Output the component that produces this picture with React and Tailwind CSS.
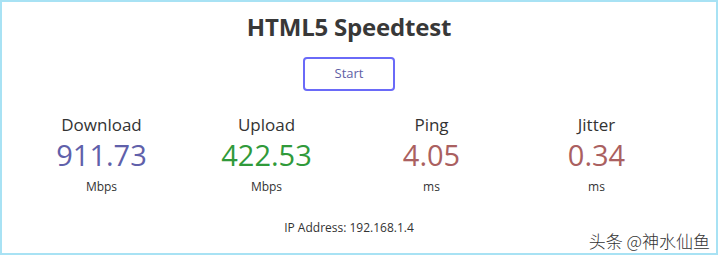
import React from 'react';

const metrics = [
  { label: 'Download', value: '911.73', unit: 'Mbps', color: 'text-[#6060aa]' },
  { label: 'Upload', value: '422.53', unit: 'Mbps', color: 'text-[#309a3a]' },
  { label: 'Ping', value: '4.05', unit: 'ms', color: 'text-[#aa6060]' },
  { label: 'Jitter', value: '0.34', unit: 'ms', color: 'text-[#aa6060]' },
];

const App = () => {
  return (
    <div className="relative w-[720px] h-[257px] bg-white font-['Open_Sans','Noto_Sans',sans-serif] text-[#333]">
      <div className="w-[718px] h-[255px] border-2 border-[#a8e2f4] pr-5 flex flex-col items-center">
        {/* Title */}
        <h1 className="mt-[10px] text-[24px] leading-[30px] font-bold tracking-[-0.2px] text-[#383838]">HTML5 Speedtest</h1>

        {/* Start button */}
        <button
          type="button"
          className="mt-[15px] w-[92px] h-[34px] border-2 border-[#6a6af8] rounded-[4px] text-[13px] text-[#5f5fa6]"
        >
          Start
        </button>

        {/* Meters */}
        <div className="mt-[24px] w-[660px] grid grid-cols-4">
          {metrics.map((m) => (
            <div key={m.label} className="flex flex-col items-center">
              <div className="text-[17px] leading-[20px] text-[#333]">{m.label}</div>
              <div className={`mt-[5px] text-[29px] leading-[30px] font-normal ${m.color}`}>{m.value}</div>
              <div className="mt-[9px] text-[12px] leading-[16px] text-[#333]">{m.unit}</div>
            </div>
          ))}
        </div>

        {/* IP */}
        <div className="mt-[25px] text-[12px] leading-[16px] text-[#333]">IP Address: 192.168.1.4</div>
      </div>

      {/* Watermark */}
      <div className="absolute right-[10px] bottom-[6px] text-[17px] leading-[20px] text-[#333] font-['Noto_Sans_CJK_SC',sans-serif] font-light">
        头条 @神水仙鱼
      </div>
    </div>
  );
};

export default App;
